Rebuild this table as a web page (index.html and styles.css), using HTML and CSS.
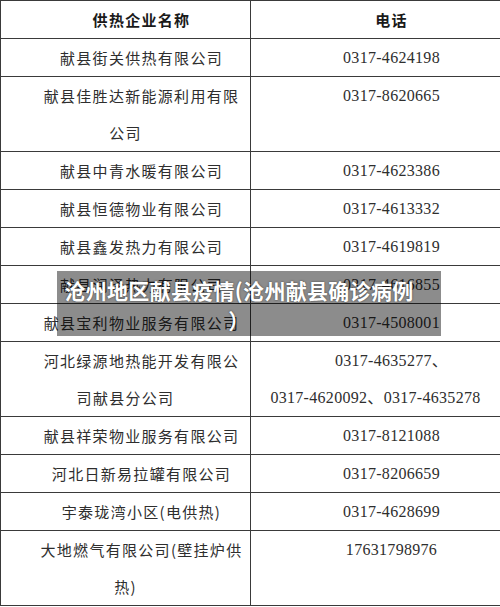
FILE: index.html
```html
<!DOCTYPE html>
<html lang="zh-CN">
<head>
<meta charset="utf-8">
<title>献县供热企业电话</title>
<link rel="stylesheet" href="styles.css">
</head>
<body>
<div class="page">
  <table class="sheet">
    <colgroup><col class="col-name"><col class="col-tel"></colgroup>
    <thead>
      <tr><th class="name">供热企业名称</th><th class="tel">电话</th></tr>
    </thead>
    <tbody>
      <tr><td class="name">献县街关供热有限公司</td><td class="tel">0317-4624198</td></tr>
      <tr><td class="name">献县佳胜达新能源利用有限公司</td><td class="tel">0317-8620665</td></tr>
      <tr><td class="name">献县中青水暖有限公司</td><td class="tel">0317-4623386</td></tr>
      <tr><td class="name">献县恒德物业有限公司</td><td class="tel">0317-4613332</td></tr>
      <tr><td class="name">献县鑫发热力有限公司</td><td class="tel">0317-4619819</td></tr>
      <tr><td class="name">献县润泽热力有限公司</td><td class="tel">0317-4616855</td></tr>
      <tr><td class="name">献县宝利物业服务有限公司</td><td class="tel">0317-4508001</td></tr>
      <tr><td class="name">河北绿源地热能开发有限公司献县分公司</td><td class="tel"><span class="num">0317-4635277、</span><span class="num">0317-4620092、</span><span class="num">0317-4635278</span></td></tr>
      <tr><td class="name">献县祥荣物业服务有限公司</td><td class="tel">0317-8121088</td></tr>
      <tr><td class="name">河北日新易拉罐有限公司</td><td class="tel">0317-8206659</td></tr>
      <tr><td class="name">宇泰珑湾小区(电供热)</td><td class="tel">0317-4628699</td></tr>
      <tr><td class="name">大地燃气有限公司(壁挂炉供热)</td><td class="tel">17631798976</td></tr>
    </tbody>
  </table>
  <div class="caption">沧州地区献县疫情(沧州献县确诊病例<wbr>）</div>
</div>
</body>
</html>
```

FILE: styles.css
```css
html, body {
  margin: 0;
  padding: 0;
  background: #ffffff;
}

.page {
  position: relative;
  width: 500px;
  height: 607px;
  overflow: hidden;
}

.sheet {
  width: 500px;
  table-layout: fixed;
  border-collapse: collapse;
  color: #2e2e2e;
}

.col-name,
.col-tel {
  width: 250px;
}

.sheet th,
.sheet td {
  border: 1px solid #3a3a3a;
  padding: 0 6px;
  line-height: 37px;
  text-align: center;
  text-indent: 32px;
  vertical-align: top;
  font-weight: normal;
}

.sheet .name {
  font-family: "Noto Sans CJK SC", "Noto Sans", sans-serif;
  font-size: 15px;
  letter-spacing: 1.3px;
}

.sheet .tel {
  font-family: "Liberation Serif", "Noto Sans CJK SC", serif;
  font-size: 16px;
  letter-spacing: 0.3px;
}

.num {
  white-space: nowrap;
}

.sheet th.name,
.sheet th.tel {
  font-family: "Noto Sans CJK SC", sans-serif;
  font-size: 15px;
  font-weight: bold;
  letter-spacing: 1.3px;
  color: #1a1a1a;
}

.caption {
  position: absolute;
  left: 57px;
  top: 271px;
  width: 358px;
  height: 60px;
  padding: 4px 23px 1px 3px;
  background: rgba(0, 0, 0, 0.45);
  color: #ffffff;
  font-family: "Noto Sans CJK SC", sans-serif;
  font-size: 21px;
  font-weight: bold;
  letter-spacing: 0.3px;
  line-height: 30px;
  text-align: center;
  text-shadow: 0 0 2px rgba(0, 0, 0, 0.6);
}
```
